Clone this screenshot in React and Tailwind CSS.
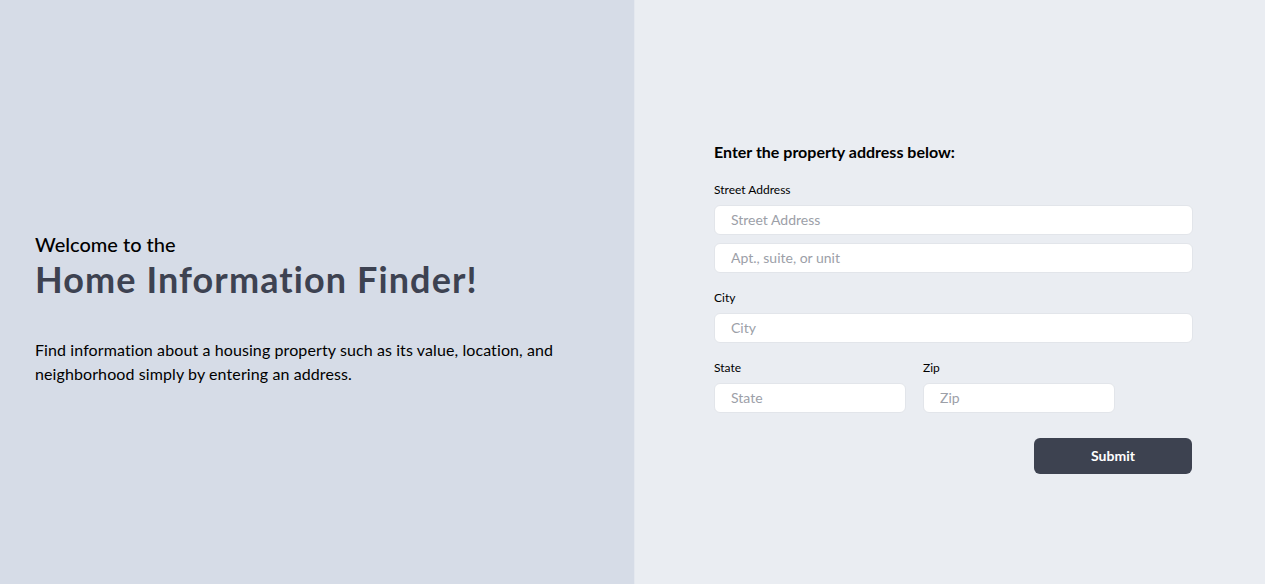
export default function App() {
  const font = { fontFamily: '"Segoe UI", Lato, "Noto Sans", sans-serif' };
  const inputCls =
    "h-[30px] w-full rounded-md border border-[#e2e5ea] bg-white px-4 text-[14px] text-gray-800 placeholder:text-[#9ca0a8] outline-none";
  return (
    <div className="grid h-[584px] w-full grid-cols-[634px_1fr] font-['Lato'] text-black" style={font}>
      <div className="flex flex-col justify-center bg-[#d6dce7] pl-[35px] pt-[34px]">
        <div className="text-[20px] leading-[24px] font-medium text-black">Welcome to the</div>
        <h1 className="mt-px text-[36px] leading-[44px] font-bold tracking-[1.1px] text-[#3d4251]">Home Information Finder!</h1>
        <p className="mt-[37px] w-[550px] text-[16px] leading-[24px] tracking-[0.1px] text-black">
          Find information about a housing property such as its value, location, and neighborhood simply by entering an address.
        </p>
      </div>
      <div className="flex flex-col justify-center border-l border-[#e4e8ef] bg-[#eaedf2] pl-[79px] pt-[31px]">
        <form className="w-[479px]" onSubmit={(e) => e.preventDefault()}>
          <h2 className="text-[16px] leading-[20px] font-bold text-black">Enter the property address below:</h2>
          <label className="mt-[20px] block text-[12px] leading-[16px] text-black">Street Address</label>
          <input className={`${inputCls} mt-[7px]`} placeholder="Street Address" />
          <input className={`${inputCls} mt-[8px]`} placeholder="Apt., suite, or unit" />
          <label className="mt-[17px] block text-[12px] leading-[16px] text-black">City</label>
          <input className={`${inputCls} mt-[7px]`} placeholder="City" />
          <div className="mt-[17px] flex gap-[17px]">
            <div className="w-[192px]">
              <label className="block text-[12px] leading-[16px] text-black">State</label>
              <input className={`${inputCls} mt-[7px]`} placeholder="State" />
            </div>
            <div className="w-[192px]">
              <label className="block text-[12px] leading-[16px] text-black">Zip</label>
              <input className={`${inputCls} mt-[7px]`} placeholder="Zip" />
            </div>
          </div>
          <div className="mt-[25px] flex justify-end pr-px">
            <button
              type="submit"
              className="h-[36px] w-[158px] rounded-md bg-[#3d4250] text-[14px] font-bold text-white"
            >
              Submit
            </button>
          </div>
        </form>
      </div>
    </div>
  );
}
